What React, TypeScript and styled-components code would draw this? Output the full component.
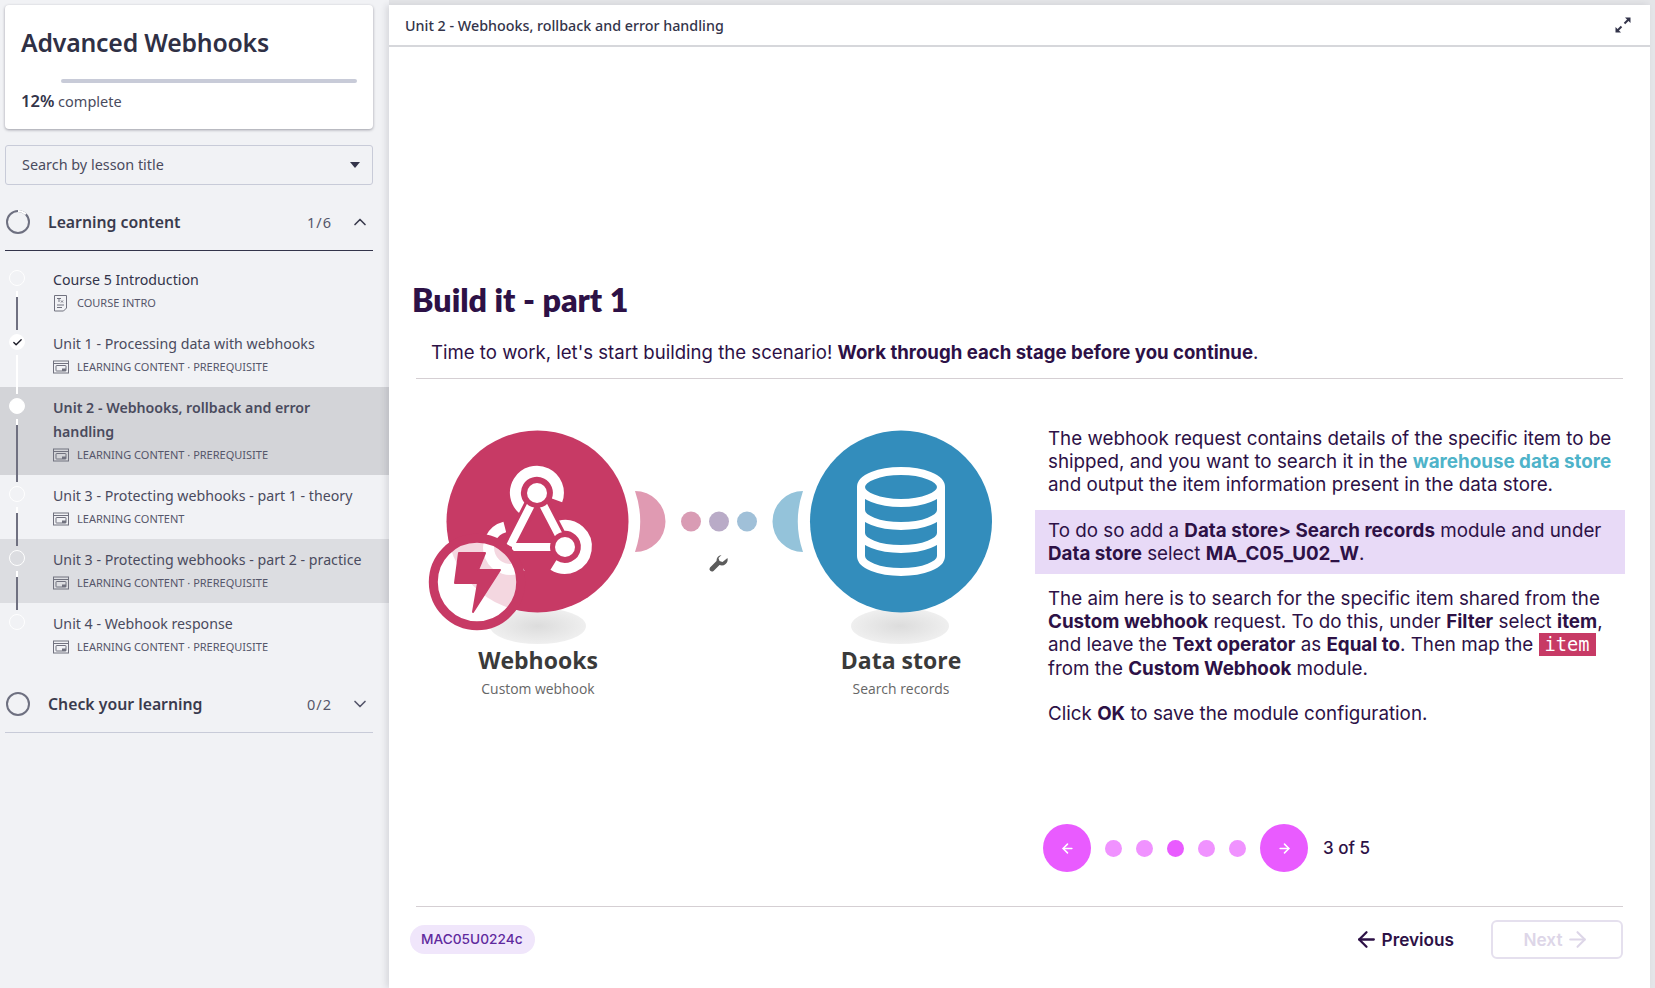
import styled, { createGlobalStyle } from 'styled-components'
import { ChevronUp, ChevronDown, Check, ArrowLeft, ArrowRight } from 'lucide-react'

const GlobalStyle = createGlobalStyle`
  html, body {
    margin: 0;
    padding: 0;
    background: #e4e5e8;
  }
  * {
    box-sizing: border-box;
  }
`

type Lesson = {
  title: string
  kind: string
  tags: string[]
  height: number
  shade?: 'active' | 'soft'
  state?: 'done' | 'current' | 'todo'
  bold?: boolean
  dark?: boolean
}

const lessons: Lesson[] = [
  { title: 'Course 5 Introduction', kind: 'doc', tags: ['COURSE INTRO'], height: 64, dark: true },
  { title: 'Unit 1 - Processing data with webhooks', kind: 'screen', tags: ['LEARNING CONTENT', 'PREREQUISITE'], height: 64, state: 'done' },
  { title: 'Unit 2 - Webhooks, rollback and error handling', kind: 'screen', tags: ['LEARNING CONTENT', 'PREREQUISITE'], height: 88, shade: 'active', state: 'current', bold: true },
  { title: 'Unit 3 - Protecting webhooks - part 1 - theory', kind: 'screen', tags: ['LEARNING CONTENT'], height: 64 },
  { title: 'Unit 3 - Protecting webhooks - part 2 - practice', kind: 'screen', tags: ['LEARNING CONTENT', 'PREREQUISITE'], height: 64, shade: 'soft' },
  { title: 'Unit 4 - Webhook response', kind: 'screen', tags: ['LEARNING CONTENT', 'PREREQUISITE'], height: 64 },
]

const ScreenIcon = () => (
  <svg width="16" height="14" viewBox="0 0 16 14" fill="none" stroke="#71727f" strokeWidth="1">
    <rect x="0.5" y="1" width="15" height="12" />
    <line x1="0.5" y1="3.5" x2="15.5" y2="3.5" />
    <rect x="3" y="5.5" width="10" height="5.5" rx="0.5" />
    <rect x="9" y="8.5" width="4" height="2.5" fill="#71727f" stroke="none" />
  </svg>
)

const DocIcon = () => (
  <MetaDocSvg width="13" height="17" viewBox="0 0 13 17" fill="none" stroke="#71727f" strokeWidth="1">
    <path d="M0.5 0.5h12v12.500l-3 3h-9z" />
    <path d="M3 3.500h4M5 3.500v3.500M7 5.500l2 2M9 5.500l-2 2M3 10h7M3 12.500h5" />
  </MetaDocSvg>
)

const ExpandIcon = () => (
  <svg width="16" height="16" viewBox="0 0 16 16" fill="#33344a" stroke="#33344a" strokeWidth="2">
    <path d="M9.500 6.500l4-4" />
    <path d="M10 0.500h5.500v5.500z" stroke="none" />
    <path d="M6.500 9.500l-4 4" />
    <path d="M0.500 10v5.500h5.500z" stroke="none" />
  </svg>
)

const RingIcon = ({ partial }: { partial?: boolean }) => (
  <RingSvg width="24" height="24" viewBox="0 0 24 24" fill="none" strokeWidth="2">
    <circle cx="12" cy="12" r="11" stroke="#6e7080" />
    {partial && <path d="M12 1a11 11 0 0 1 7.800 3.200" stroke="#fff" />}
  </RingSvg>
)

// three-node hook mark: arcs first, then the links and discs cut out in red
const WebhookGlyph = () => (
  <g fill="none">
    <g stroke="#fff" strokeWidth="11">
      <path d="M557 500.400A21.500 21.500 0 1 0 524 510" />
      <path d="M559.500 526A21.500 21.500 0 1 1 553.400 565" />
      <path d="M504.800 527A21.500 21.500 0 1 0 521.600 566" />
    </g>
    <g stroke="#c73a65" strokeWidth="14">
      <path d="M537 493L565 547M537 493L510 546M512 547H565" />
    </g>
    <g stroke="#fff" strokeWidth="8">
      <path d="M537 493L565 547M537 493L510 546M512 547H565" />
    </g>
    <circle cx="537" cy="493" r="15" fill="#c73a65" />
    <circle cx="537" cy="493" r="10" fill="#fff" />
    <circle cx="565" cy="547" r="15" fill="#c73a65" />
    <circle cx="565" cy="547" r="10" fill="#fff" />
  </g>
)

const Illustration = () => (
  <DiagramSvg width="600" height="300" viewBox="410 410 600 300">
    <defs>
      <radialGradient id="floor">
        <stop offset="0%" stopColor="#dcdcdc" />
        <stop offset="100%" stopColor="#efefef" />
      </radialGradient>
    </defs>
    <ellipse cx="538" cy="626" rx="48" ry="18" fill="url(#floor)" />
    <ellipse cx="900" cy="626" rx="49" ry="18" fill="url(#floor)" />
    <path d="M635 491a30.500 30.500 0 0 1 0 61 94 94 0 0 0 0-61z" fill="#e09ab2" />
    <path d="M803 491a30.500 30.500 0 0 0 0 61 94 94 0 0 1 0-61z" fill="#94c3da" />
    <circle cx="691" cy="521.500" r="10" fill="#d99cb4" />
    <circle cx="719" cy="521.500" r="10" fill="#b9abc7" />
    <circle cx="747" cy="521.500" r="10" fill="#a0c0d8" />
    <path d="M727.500 558a6 6 0 0 1-8 7l-6 6a2.500 2.500 0 0 1-3.500-3.500l6.500-6.500a6 6 0 0 1 5-6l-3 3 1 3 3 1z" fill="#5c5c5c" />
    <circle cx="537.500" cy="521.500" r="91" fill="#c73a65" />
    <WebhookGlyph />
    <circle cx="901" cy="521.500" r="91" fill="#338dbc" />
    <g fill="none" stroke="#fff" strokeWidth="8">
      <ellipse cx="901" cy="487" rx="40" ry="16" />
      <path d="M861 487v69c0 9 18 16 40 16s40-7 40-16v-69" />
      <path d="M861 510c0 9 18 16 40 16s40-7 40-16" />
      <path d="M861 533c0 9 18 16 40 16s40-7 40-16" />
    </g>
    <circle cx="477" cy="582" r="43.700" fill="#fff" fillOpacity="0.8" stroke="#c73a65" strokeWidth="9" />
    <path d="M459 553h26l-7 17h22l-27 42 5-29h-23z" fill="#c73a65" stroke="#c73a65" strokeWidth="2" strokeLinejoin="round" />
    <DiagramTitle x="538" y="669">Webhooks</DiagramTitle>
    <DiagramNote x="538" y="694">Custom webhook</DiagramNote>
    <DiagramTitle x="901" y="669">Data store</DiagramTitle>
    <DiagramNote x="901" y="694">Search records</DiagramNote>
  </DiagramSvg>
)

export default function App() {
  return (
    <>
      <GlobalStyle />
      <Page>
        <Sidebar>
          <CourseCard>
            <CourseTitle>Advanced Webhooks</CourseTitle>
            <ProgressTrack />
            <ProgressLabel><b>12%</b> complete</ProgressLabel>
          </CourseCard>
          <SearchBox>
            <span>Search by lesson title</span>
            <Caret />
          </SearchBox>
          <SectionHeader $strong>
            <RingIcon partial />
            <SectionTitle>Learning content</SectionTitle>
            <SectionCount>1/6</SectionCount>
            <ChevronUp size={20} color="#3a3b4e" strokeWidth={2} />
          </SectionHeader>
          <LessonList>
            {lessons.map((lesson, i) => (
              <LessonRow key={lesson.title} $height={lesson.height} $shade={lesson.shade}>
                <Rail>
                  <Node $state={lesson.state ?? 'todo'}>
                    {lesson.state === 'done' && <Check size={11} color="#1c1c28" strokeWidth={3} />}
                  </Node>
                  {i < lessons.length - 1 && <Connector $dark={i !== 1} />}
                </Rail>
                <LessonBody>
                  <LessonTitle $bold={lesson.bold} $dark={lesson.dark}>{lesson.title}</LessonTitle>
                  <LessonMeta>
                    {lesson.kind === 'doc' ? <DocIcon /> : <ScreenIcon />}
                    <span>{lesson.tags.join(' · ')}</span>
                  </LessonMeta>
                </LessonBody>
              </LessonRow>
            ))}
          </LessonList>
          <SectionHeader>
            <RingIcon />
            <SectionTitle>Check your learning</SectionTitle>
            <SectionCount>0/2</SectionCount>
            <ChevronDown size={20} color="#55566a" strokeWidth={2} />
          </SectionHeader>
        </Sidebar>
        <Main>
          <TopBar>
            <TopTitle>Unit 2 - Webhooks, rollback and error handling</TopTitle>
            <ExpandIcon />
          </TopBar>
          <Content>
            <Heading>Build it - part 1</Heading>
            <Intro>
              Time to work, let's start building the scenario! <b>Work through each stage before you continue</b>.
            </Intro>
            <Slide>
              <Illustration />
              <Copy>
                <Para>
                  The webhook request contains details of the specific item to be shipped, and you want to search it in the <LinkText>warehouse data store</LinkText> and output the item information present in the data store.
                </Para>
                <Callout>
                  To do so add a <b>Data store&gt; Search records</b> module and under <b>Data store</b> select <b>MA_C05_U02_W</b>.
                </Callout>
                <Para $spaced>
                  The aim here is to search for the specific item shared from the <b>Custom webhook</b> request. To do this, under <b>Filter</b> select <b>item</b>, and leave the <b>Text operator</b> as <b>Equal to</b>. Then map the <Code>item</Code> from the <b>Custom Webhook</b> module.
                </Para>
                <Para>
                  Click <b>OK</b> to save the module configuration.
                </Para>
              </Copy>
            </Slide>
            <Pager>
              <PagerButton><ArrowLeft size={15} color="#fff" strokeWidth={2.5} /></PagerButton>
              {[0, 1, 2, 3, 4].map((n) => (
                <PagerDot key={n} $on={n === 2} />
              ))}
              <PagerButton><ArrowRight size={15} color="#fff" strokeWidth={2.5} /></PagerButton>
              <PagerLabel>3 of 5</PagerLabel>
            </Pager>
          </Content>
          <Footer>
            <CodeBadge>MAC05U0224c</CodeBadge>
            <FooterNav>
              <PrevButton><ArrowLeft size={25} strokeWidth={2.2} />Previous</PrevButton>
              <NextButton>Next<ArrowRight size={25} strokeWidth={2} /></NextButton>
            </FooterNav>
          </Footer>
        </Main>
      </Page>
    </>
  )
}

const Page = styled.div`
  display: flex;
  width: 1655px;
  height: 988px;
  overflow: hidden;
  background: #e4e5e8;
`

const Sidebar = styled.aside`
  width: 389px;
  flex-shrink: 0;
  padding-top: 5px;
  background: #f1f2f5;
  color: #33344a;
  font-family: "Noto Sans", sans-serif;
`

const CourseCard = styled.section`
  width: 368px;
  height: 124px;
  margin-left: 5px;
  padding: 21px 16px 0;
  background: #fff;
  border-radius: 4px;
  box-shadow: 0 1px 3px rgba(30, 30, 50, 0.4);
`

const CourseTitle = styled.h1`
  margin: 0;
  font-size: 24.8px;
  line-height: 33px;
  font-weight: 600;
  color: #2f3045;
  letter-spacing: -0.2px;
`

const ProgressTrack = styled.div`
  width: 296px;
  height: 4px;
  margin: 20px 0 0 40px;
  border-radius: 2px;
  background: #c8cbd8;
`

const ProgressLabel = styled.div`
  margin-top: 8px;
  font-size: 14.5px;
  line-height: 20px;
  color: #4a4b5e;
  b {
    font-size: 16.5px;
    font-weight: 600;
    color: #33344a;
  }
`

const SearchBox = styled.div`
  display: flex;
  align-items: center;
  justify-content: space-between;
  width: 368px;
  height: 40px;
  margin: 16px 0 0 5px;
  padding: 0 12px 2px 16px;
  border: 1px solid #c8cbd8;
  border-radius: 3px;
  font-size: 14.4px;
  color: #4a4b5e;
`

const Caret = styled.i`
  width: 0;
  height: 0;
  margin-top: 2px;
  border-left: 5px solid transparent;
  border-right: 5px solid transparent;
  border-top: 6px solid #33344a;
`

const SectionHeader = styled.header<{ $strong?: boolean }>`
  display: flex;
  align-items: center;
  width: 368px;
  height: 66px;
  margin-left: 5px;
  padding: 9px 3px 0 1px;
  border-bottom: 1px solid ${(p) => (p.$strong ? '#33344a' : '#c8cbd8')};
`

const RingSvg = styled.svg`
  flex-shrink: 0;
  margin-right: 18px;
`

const SectionTitle = styled.span`
  flex: 1;
  font-size: 15.8px;
  font-weight: 600;
  color: #3a3b4e;
`

const SectionCount = styled.span`
  margin-right: 18px;
  font-size: 14.5px;
  color: #55566a;
  letter-spacing: 1px;
`

const LessonList = styled.ol`
  list-style: none;
  margin: 8px 0 0;
  padding: 0;
  height: 408px;
`

const LessonRow = styled.li<{ $height: number; $shade?: 'active' | 'soft' }>`
  display: flex;
  height: ${(p) => p.$height}px;
  background: ${(p) => (p.$shade === 'active' ? '#d3d4d8' : p.$shade === 'soft' ? '#dcdde1' : 'transparent')};
`

const Rail = styled.div`
  position: relative;
  width: 34px;
  margin-right: 19px;
  flex-shrink: 0;
  padding: 11px 0 0 9px;
`

const Node = styled.span<{ $state: 'done' | 'current' | 'todo' }>`
  display: flex;
  align-items: center;
  justify-content: center;
  width: 16px;
  height: 16px;
  border-radius: 50%;
  border: 1px solid #fff;
  background: ${(p) => (p.$state === 'todo' ? 'transparent' : '#fff')};
`

const Connector = styled.span<{ $dark: boolean }>`
  position: absolute;
  z-index: 1;
  top: 32px;
  bottom: -7px;
  left: 16px;
  width: 2px;
  background: ${(p) => (p.$dark ? 'linear-gradient(#fff 6px, #6f7080 6px)' : '#fff')};
`

const LessonBody = styled.div`
  padding-top: 9px;
  min-width: 0;
`

const LessonTitle = styled.div<{ $bold?: boolean; $dark?: boolean }>`
  width: 312px;
  font-size: 14.2px;
  line-height: 24px;
  font-weight: ${(p) => (p.$bold ? 600 : 400)};
  color: ${(p) => (p.$dark ? '#33344a' : '#4a4b5e')};
`

const LessonMeta = styled.div`
  display: flex;
  align-items: center;
  gap: 8px;
  height: 16px;
  margin-top: 3px;
  font-size: 11px;
  line-height: 16px;
  color: #55566a;
`

const MetaDocSvg = styled.svg`
  margin: 0 2px 0 1px;
`

const Main = styled.main`
  display: flex;
  flex-direction: column;
  width: 1261px;
  height: 983px;
  margin-top: 5px;
  background: #fff;
  box-shadow: -3px 0 6px rgba(40, 40, 60, 0.12);
`

const TopBar = styled.div`
  display: flex;
  align-items: center;
  justify-content: space-between;
  height: 42px;
  padding: 0 19px 0 16px;
  border-bottom: 2px solid #d6d7db;
`

const TopTitle = styled.div`
  font-family: "Noto Sans", sans-serif;
  font-size: 14.3px;
  font-weight: 500;
  color: #33344a;
`

const Content = styled.div`
  flex: 1;
  display: flex;
  flex-direction: column;
  margin: 0 27px;
  border-bottom: 1px solid #d5cfd3;
  color: #2d1146;
  font-family: Inter, sans-serif;
`

const Heading = styled.h2`
  margin: 231px 0 0 -4px;
  font-family: Lato, sans-serif;
  font-size: 32.2px;
  line-height: 44px;
  font-weight: 800;
`

const Intro = styled.p`
  margin: 16px 0 0;
  padding: 0 0 12px 15px;
  border-bottom: 1px solid #d5cfd3;
  font-size: 18.6px;
  line-height: 28px;
  b {
    font-weight: 650;
  }
`

const Slide = styled.div`
  display: flex;
  margin: 31px 0 0 -6px;
`

const DiagramSvg = styled.svg`
  flex-shrink: 0;
`

const Copy = styled.div`
  flex: none;
  width: 590px;
  margin-left: 25px;
  padding-top: 17px;
  font-size: 18.8px;
  line-height: 23.2px;
  b {
    font-weight: 650;
  }
`

const Para = styled.p<{ $spaced?: boolean }>`
  margin: 0 0 ${(p) => (p.$spaced ? 22 : 13)}px;
  padding: 0 8px 0 13px;
`

const Callout = styled.p`
  margin: 0 0 13px;
  padding: 9px 8px 9px 13px;
  background: #e8daf7;
`

const LinkText = styled.b`
  color: #4eb3c9;
`

const Code = styled.code`
  padding: 1px 6px;
  background: #c73a65;
  color: #fff;
  font-family: "DejaVu Sans Mono", monospace;
  font-size: 18.7px;
`

const Pager = styled.div`
  display: flex;
  align-items: center;
  gap: 14px;
  margin: auto 0 34px 627px;
`

const PagerButton = styled.span`
  display: flex;
  align-items: center;
  justify-content: center;
  width: 48px;
  height: 48px;
  border-radius: 50%;
  background: #e95bff;
`

const PagerDot = styled.span<{ $on: boolean }>`
  width: 17px;
  height: 17px;
  border-radius: 50%;
  background: ${(p) => (p.$on ? '#e95bff' : '#f092ff')};
`

const PagerLabel = styled.span`
  margin-left: 1px;
  font-size: 17px;
  font-weight: 500;
`

const Footer = styled.div`
  display: flex;
  align-items: center;
  justify-content: space-between;
  height: 64px;
  margin-bottom: 17px;
  padding: 0 27px 0 21px;
  font-family: Inter, sans-serif;
`

const CodeBadge = styled.span`
  padding: 6px 12px 6px 11px;
  border-radius: 16px;
  background: #f0e6fb;
  color: #5f2a9e;
  font-size: 13.7px;
  line-height: 17px;
  font-weight: 500;
`

const FooterNav = styled.div`
  display: flex;
  align-items: center;
  gap: 37px;
`

const PrevButton = styled.span`
  display: flex;
  align-items: center;
  gap: 3px;
  color: #2d1146;
  font-size: 17.2px;
  font-weight: 600;
`

const NextButton = styled.span`
  display: flex;
  align-items: center;
  justify-content: center;
  gap: 3px;
  width: 132px;
  height: 39px;
  border: 2px solid #e5e0ee;
  border-radius: 6px;
  color: #ddd6e8;
  font-size: 17.2px;
  font-weight: 600;
`

const DiagramTitle = styled.text`
  font-family: "Open Sans", sans-serif;
  font-size: 23px;
  font-weight: 700;
  fill: #3a3a3a;
  text-anchor: middle;
`

const DiagramNote = styled.text`
  font-family: "Open Sans", sans-serif;
  font-size: 13.9px;
  fill: #666;
  text-anchor: middle;
`
